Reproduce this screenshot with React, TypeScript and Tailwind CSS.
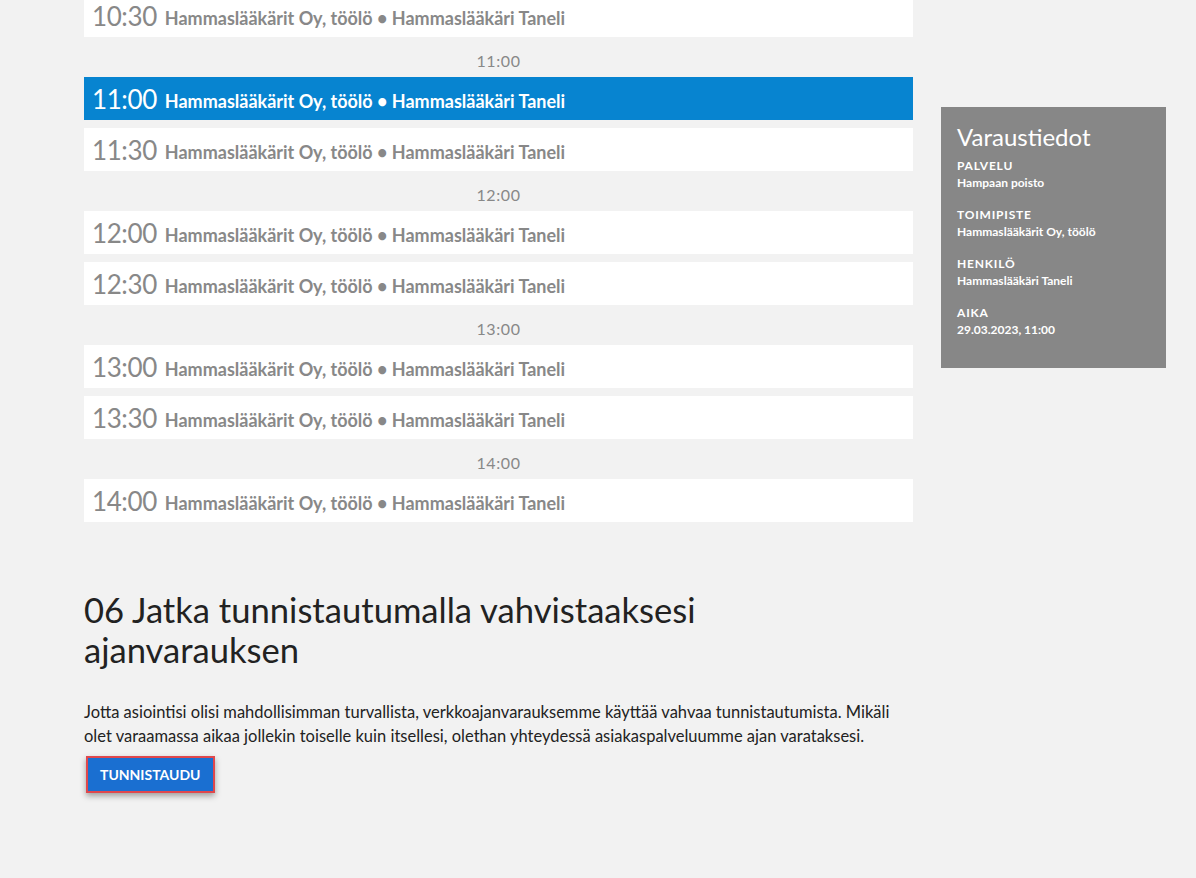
import React from "react";

const Slot = ({ time, active = false }: { time: string; active?: boolean }) => (
  <div
    className={`h-[43px] flex items-center pl-2 ${active ? "bg-[#0784d0] text-white" : "bg-white text-[#888888]"}`}
  >
    <span className="text-[26px] font-normal leading-none tracking-[-0.4px]">{time}</span>
    <span className="ml-[8px] text-[18px] font-bold leading-none mt-[5px]">
      Hammaslääkärit Oy, töölö • Hammaslääkäri Taneli
    </span>
  </div>
);

const Hour = ({ label }: { label: string }) => (
  <div className="h-[40px] flex items-center justify-center text-[16px] tracking-[0.6px] text-[#888888] pt-[8px]">{label}</div>
);

const Info = ({ label, value }: { label: string; value: string }) => (
  <div className="mb-[15px]">
    <div className="text-[12px] font-bold tracking-[0.8px] leading-[18px]">{label}</div>
    <div className="text-[12px] font-bold leading-[16px]">{value}</div>
  </div>
);

export default function App() {
  return (
    <div
      className="min-h-[878px] bg-[#f2f2f2] text-[#222222] overflow-hidden"
      style={{ fontFamily: "Lato, 'Open Sans', sans-serif" }}
    >
      <div className="flex pl-[84px] pr-[30px] gap-[28px]">
        <div className="w-[829px] -mt-[6px]">
          <Slot time="10:30" />
          <Hour label="11:00" />
          <Slot time="11:00" active />
          <div className="h-[8px]" />
          <Slot time="11:30" />
          <Hour label="12:00" />
          <Slot time="12:00" />
          <div className="h-[8px]" />
          <Slot time="12:30" />
          <Hour label="13:00" />
          <Slot time="13:00" />
          <div className="h-[8px]" />
          <Slot time="13:30" />
          <Hour label="14:00" />
          <Slot time="14:00" />

          <h2 className="mt-[68px] text-[34.6px] leading-[40px] font-normal text-[#222222] pr-[200px]">
            06 Jatka tunnistautumalla vahvistaaksesi ajanvarauksen
          </h2>
          <p className="mt-[30px] max-w-[815px] text-[16.5px] leading-[24px] text-[#222222]">
            Jotta asiointisi olisi mahdollisimman turvallista, verkkoajanvarauksemme käyttää vahvaa tunnistautumista. Mikäli olet varaamassa aikaa jollekin toiselle kuin itsellesi, olethan yhteydessä asiakaspalveluumme ajan varataksesi.
          </p>
          <div className="mt-[8px] ml-[2px] inline-block border-[2px] border-[#e0474c] shadow-[0_3px_6px_rgba(0,0,0,0.35)]">
            <button className="h-[33px] px-[12px] bg-[#1a6fd1] text-white text-[14px] font-bold leading-none">
              TUNNISTAUDU
            </button>
          </div>
        </div>

        <div className="mt-[107px] w-[225px] h-[261px] bg-[#878787] text-white px-[16px] pt-[16px] self-start">
          <div className="text-[24px] leading-[28px] mb-[6px]">Varaustiedot</div>
          <Info label="PALVELU" value="Hampaan poisto" />
          <Info label="TOIMIPISTE" value="Hammaslääkärit Oy, töölö" />
          <Info label="HENKILÖ" value="Hammaslääkäri Taneli" />
          <Info label="AIKA" value="29.03.2023, 11:00" />
        </div>
      </div>
    </div>
  );
}
